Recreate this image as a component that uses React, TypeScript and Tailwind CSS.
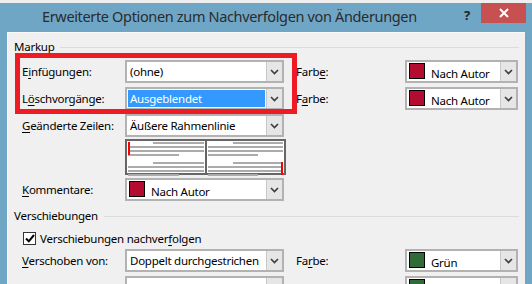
import React from "react";

const font = { fontFamily: '"Noto Sans", "Open Sans", sans-serif' };

function Chevron() {
  return (
    <svg width="9" height="6" viewBox="0 0 9 6" className="block">
      <polyline points="1,1 4.5,4.5 8,1" fill="none" stroke="#3c3c3c" strokeWidth="1.6" />
    </svg>
  );
}

function Mn({ children }: { children: React.ReactNode }) {
  return <span className="underline underline-offset-2">{children}</span>;
}

function Combo({
  width,
  text,
  swatch,
  selected,
}: {
  width: string;
  text?: string;
  swatch?: string;
  selected?: boolean;
}) {
  return (
    <div className={`${width} h-[23px] shrink-0 flex border-2 border-[#b2b2b2] bg-white`}>
      <div className="flex-1 flex items-center pl-[1px] min-w-0 whitespace-nowrap overflow-hidden">
        {swatch && (
          <div
            className="w-[16px] h-[16px] shrink-0 border border-black ml-[1px] mr-[6px] mt-[-2px]"
            style={{ backgroundColor: swatch }}
          />
        )}
        {selected ? (
          <div className="flex-1 h-[17px] bg-[#3399ff] text-white flex items-center pl-[2px] mr-[1px]">
            {text}
          </div>
        ) : (
          <span className={swatch ? "mt-[5px]" : "pl-[2px]"}>{text}</span>
        )}
      </div>
      <div className="w-[16px] shrink-0 bg-[#e6e6e6] border-l border-[#c8c8c8] flex items-center justify-center">
        <Chevron />
      </div>
    </div>
  );
}

function Preview() {
  const para = (red: "left" | "right" | null) => (
    <div className="relative flex flex-col gap-[2px] mb-[3px]">
      <div className="h-[2px] bg-[#ababab] ml-[25px]" />
      <div className="h-[2px] bg-[#ababab]" />
      <div className="h-[2px] bg-[#ababab]" />
      <div className="h-[2px] bg-[#ababab] mr-[25px]" />
      {red === "left" && <div className="absolute left-[0px] top-[0px] w-[2px] h-[13px] bg-[#ff0000]" />}
      {red === "right" && <div className="absolute right-[0px] top-[0px] w-[2px] h-[13px] bg-[#ff0000]" />}
    </div>
  );
  return (
    <div className="w-[161px] h-[36px] border-2 border-[#666666] bg-white flex">
      <div className="flex-1 pt-[1px] pl-[1px] pr-[1px] flex flex-col gap-[3px]">
        {para("left")}
        {para(null)}
      </div>
      <div className="w-[2px] bg-[#666666]" />
      <div className="flex-1 pt-[1px] pl-[1px] pr-[1px] flex flex-col gap-[3px]">
        {para(null)}
        {para("right")}
      </div>
    </div>
  );
}

export default function App() {
  return (
    <div
      className="w-[532px] h-[284px] overflow-hidden relative bg-[#6fa6c6] flex flex-col text-[11.5px] tracking-[-0.25px] text-black"
      style={font}
    >
      <div className="h-[3px] bg-[#eeeeee] shrink-0" />
      <div className="h-[29px] shrink-0 flex items-start">
        <div className="pl-[42px] pt-[3px] text-[14.5px] text-[#2b2b2b] tracking-[-0.35px] whitespace-nowrap">
          Erweiterte Optionen zum Nachverfolgen von Änderungen
        </div>
        <div className="ml-auto mt-[3px] mr-[11px] text-[13px] font-bold text-[#222]">?</div>
        <div className="w-[45px] h-[20px] bg-[#c75050] flex items-center justify-center mr-[6px]">
          <svg width="10" height="10" viewBox="0 0 10 10">
            <path d="M1 1 L9 9 M9 1 L1 9" stroke="white" strokeWidth="2" />
          </svg>
        </div>
      </div>
      <div className="flex-1 mx-[7px] bg-[#f0f0f0] border-l border-t border-[#fafafa] relative">
        {/* Markup */}
        <div className="flex items-center mt-[7px] ml-[6px] mr-[6px] h-[14px]">
          <span>Markup</span>
          <div className="flex-1 h-px bg-[#dcdcdc] ml-[6px]" />
        </div>
        <div className="flex flex-col gap-[4px] mt-[6px] ml-[14px]">
          <div className="flex items-center">
            <div className="w-[103px]">
              E<Mn>i</Mn>nfügungen:
            </div>
            <Combo width="w-[159px]" text="(ohne)" />
            <div className="w-[121px] pl-[12px]">
              Farb<Mn>e</Mn>:
            </div>
            <Combo width="w-[113px]" text="Nach Autor" swatch="#b40c30" />
          </div>
          <div className="flex items-center">
            <div className="w-[103px]">
              L<Mn>ö</Mn>schvorgänge:
            </div>
            <Combo width="w-[159px]" text="Ausgeblendet" selected />
            <div className="w-[121px] pl-[12px]">
              F<Mn>a</Mn>rbe:
            </div>
            <Combo width="w-[113px]" text="Nach Autor" swatch="#b40c30" />
          </div>
          <div className="flex items-center">
            <div className="w-[103px]">
              <Mn>G</Mn>eänderte Zeilen:
            </div>
            <Combo width="w-[159px]" text="Äußere Rahmenlinie" />
          </div>
          <div className="flex pl-[103px] -mt-[2px]">
            <Preview />
          </div>
          <div className="flex items-center -mt-[1px]">
            <div className="w-[103px]">
              <Mn>K</Mn>ommentare:
            </div>
            <Combo width="w-[159px]" text="Nach Autor" swatch="#b40c30" />
          </div>
        </div>
        {/* Verschiebungen */}
        <div className="flex items-center mt-[8px] ml-[6px] mr-[6px] h-[14px]">
          <span>Verschiebungen</span>
          <div className="flex-1 h-px bg-[#dcdcdc] ml-[6px]" />
        </div>
        <div className="flex items-center h-[13px] mt-[9px] ml-[15px]">
          <div className="w-[13px] h-[13px] border border-[#333] bg-white flex items-center justify-center">
            <svg width="10" height="9" viewBox="0 0 10 9">
              <polyline points="1,4.5 3.8,7.3 9,1" fill="none" stroke="black" strokeWidth="2" />
            </svg>
          </div>
          <span className="ml-[4px]">
            Verschiebungen nachver<Mn>f</Mn>olgen
          </span>
        </div>
        <div className="flex flex-col gap-[4px] mt-[4px] ml-[14px]">
          <div className="flex items-center">
            <div className="w-[103px]">
              <Mn>V</Mn>erschoben von:
            </div>
            <Combo width="w-[159px]" text="Doppelt durchgestrichen" />
            <div className="w-[121px] pl-[12px]">
              Fa<Mn>r</Mn>be:
            </div>
            <Combo width="w-[113px]" text="Grün" swatch="#2f6a37" />
          </div>
          <div className="flex items-center">
            <div className="w-[103px]" />
            <Combo width="w-[159px]" text="" />
            <div className="w-[121px]" />
            <Combo width="w-[113px]" text="" swatch="#2f6a37" />
          </div>
        </div>
        {/* annotation */}
        <div className="absolute left-[7px] top-[20px] w-[282px] h-[61px] border-[5px] border-[#ed1c24]" />
      </div>
    </div>
  );
}
